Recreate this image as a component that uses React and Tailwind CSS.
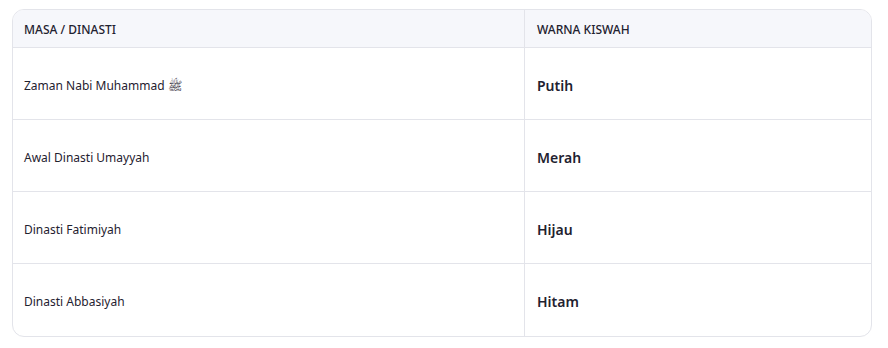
export default function App() {
  const rows = [
    ["Zaman Nabi Muhammad ﷺ", "Putih"],
    ["Awal Dinasti Umayyah", "Merah"],
    ["Dinasti Fatimiyah", "Hijau"],
    ["Dinasti Abbasiyah", "Hitam"],
  ];
  return (
    <div className="bg-white w-[888px] h-[348px] pt-[9px] pl-[12px]" style={{ fontFamily: '"Noto Sans", "DejaVu Sans", sans-serif' }}>
      <div className="w-[860px] border border-[#e3e4ea] rounded-[12px] overflow-hidden">
        <div className="flex h-[38px] bg-[#f6f7fb] border-b border-[#e3e4ea] text-[12px] font-medium text-[#1f2230]">
          <div className="w-[512px] border-r border-[#e3e4ea] px-[11px] pt-[2px] flex items-center">MASA / DINASTI</div>
          <div className="flex-1 px-[12px] pt-[2px] flex items-center">WARNA KISWAH</div>
        </div>
        {rows.map((r, i) => (
          <div key={i} className={`flex h-[72px] ${i < 3 ? "border-b border-[#e3e4ea]" : ""}`}>
            <div className="w-[512px] border-r border-[#e3e4ea] px-[11px] pt-[4px] flex items-center text-[12px] text-[#1f2230]">{r[0]}</div>
            <div className="flex-1 px-[12px] pt-[3px] flex items-center text-[14px] font-semibold text-[#1f2230]">{r[1]}</div>
          </div>
        ))}
      </div>
    </div>
  );
}
